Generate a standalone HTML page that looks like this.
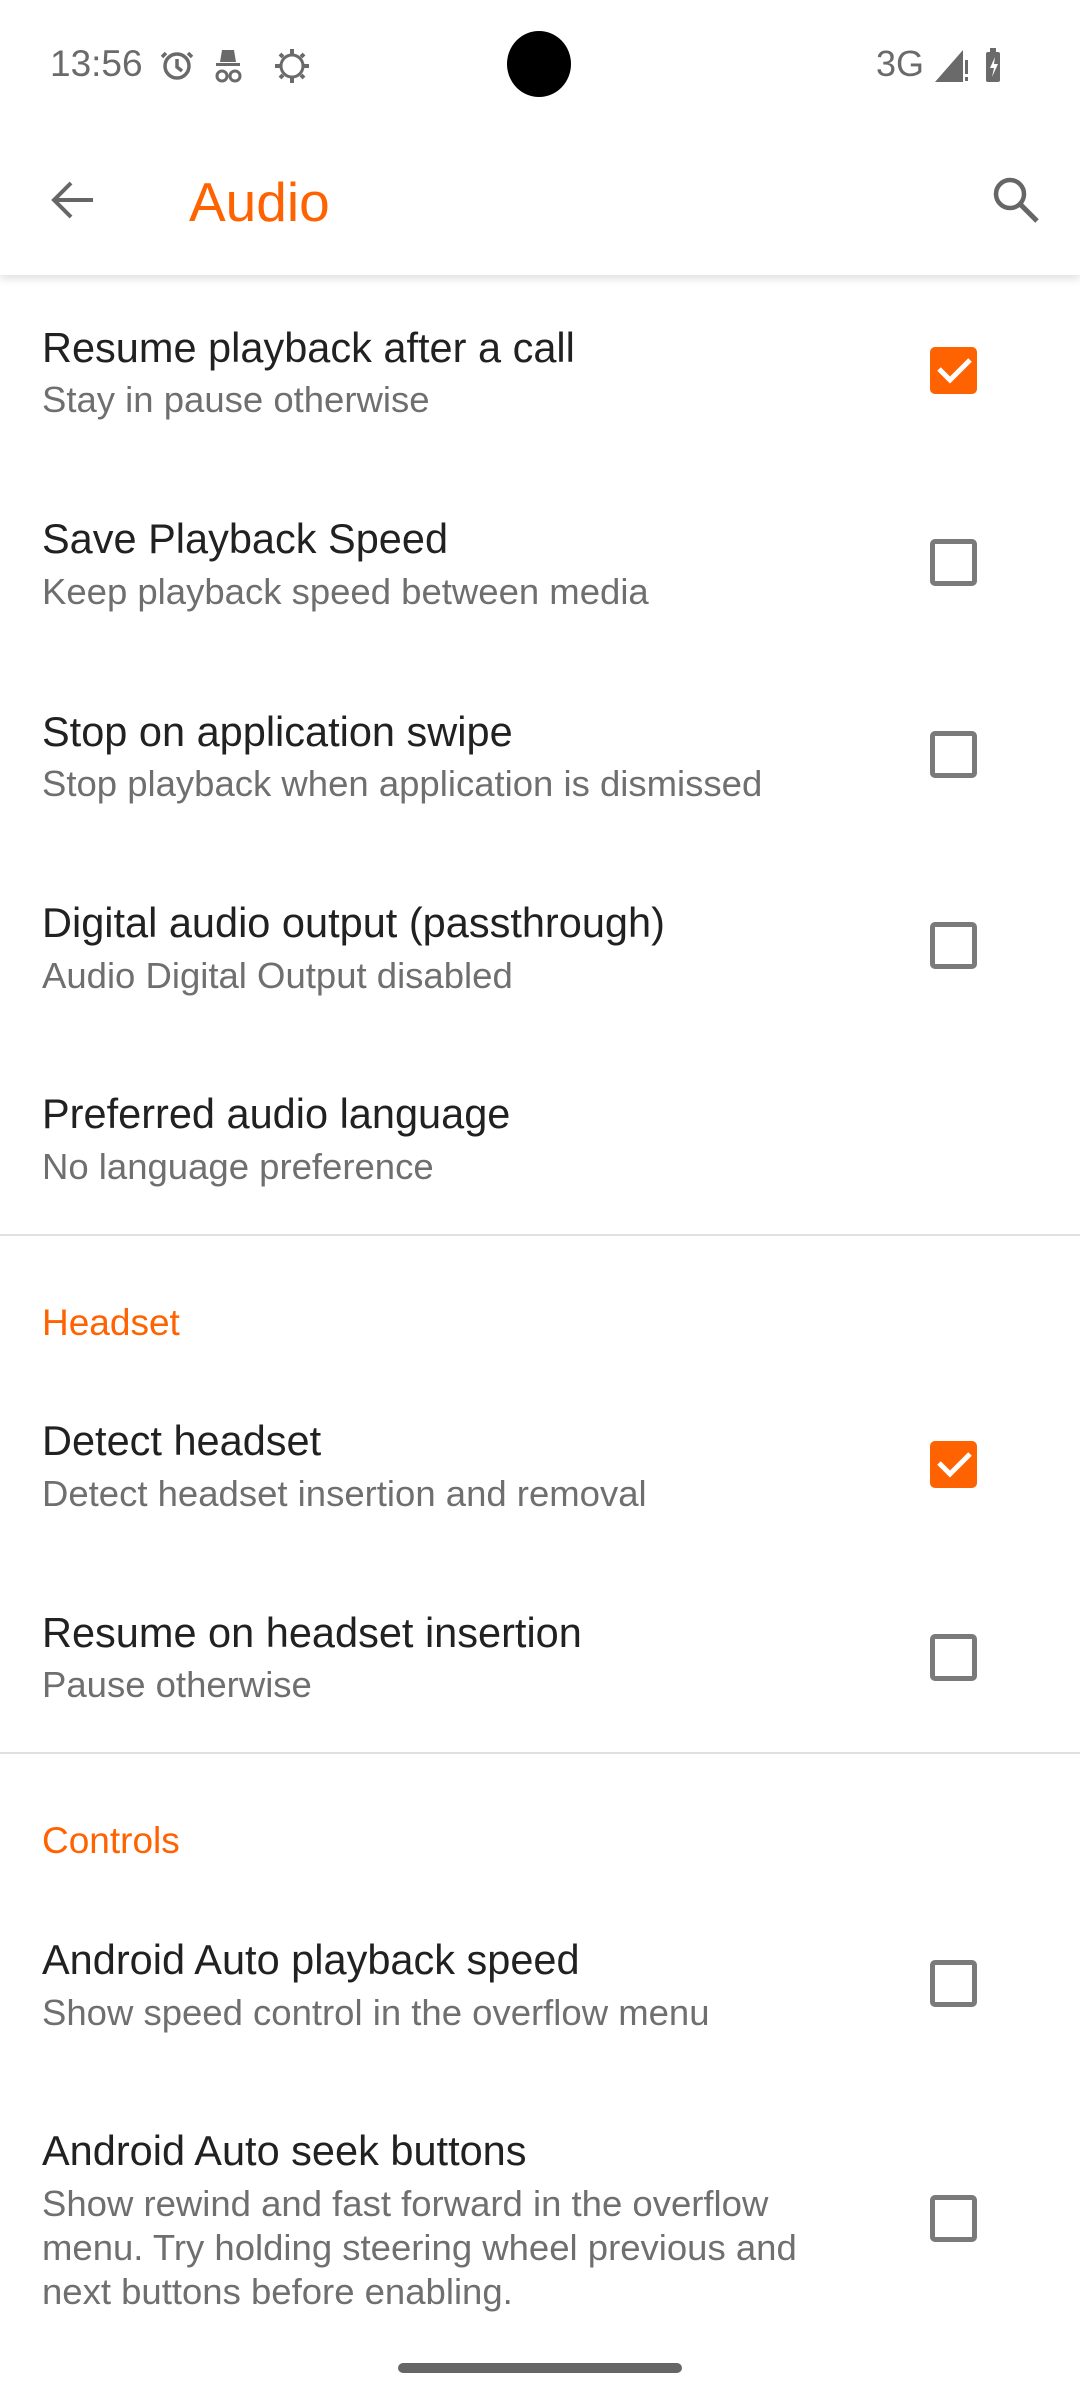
<!DOCTYPE html>
<html><head><meta charset="utf-8"><style>
*{margin:0;padding:0;box-sizing:border-box}
body{width:1080px;height:2400px;background:#fff;position:relative;overflow:hidden;font-family:"Liberation Sans",sans-serif}
.a{position:absolute;white-space:nowrap}
.t{left:42px;font-size:41.5px;color:#212121;line-height:50px}
.s{left:42px;font-size:36.5px;color:#6f6f6f;line-height:44px}
.h{left:42px;font-size:37px;color:#ff6200;line-height:44px}
.cb{position:absolute;left:930px;width:47px;height:47px;border:5px solid #7a7a7a;border-radius:5px}
.cb.on{background:#ff6200;border:none}
.div{position:absolute;left:0;width:1080px;height:2px;background:#e0e0e0}
</style></head><body>
<div class="a" style="left:0;top:0;width:1080px;height:275px;background:#fff;box-shadow:0 4px 8px rgba(0,0,0,0.12)"></div>
<div class="a" style="left:50px;top:42px;font-size:37px;color:#6a6a6a;line-height:44px">13:56</div>
<svg class="a" style="left:150px;top:46px" width="180" height="40" viewBox="0 0 180 40">
<g fill="none" stroke="#6a6a6a" stroke-width="3.5"><circle cx="27" cy="20" r="12"/><path d="M27 13v8l5 4M16 7l-4 4M38 7l4 4"/></g>
<g fill="#6a6a6a"><path d="M72 4h12l2 12h-16z"/><rect x="66" y="17" width="24" height="3"/></g>
<g fill="none" stroke="#6a6a6a" stroke-width="3"><circle cx="72" cy="30" r="5"/><circle cx="85" cy="30" r="5"/><circle cx="142" cy="20" r="11"/></g>
<g stroke="#6a6a6a" stroke-width="4"><path d="M142 3v5M142 32v5M125 20h5M154 20h5M130 8l3 3M154 8l-3 3M130 32l3-3M154 32l-3-3"/></g>
</svg>
<div class="a" style="left:876px;top:42px;font-size:36px;color:#6a6a6a;line-height:44px">3G</div>
<svg class="a" style="left:932px;top:46px" width="80" height="40" viewBox="0 0 80 40"><path d="M3 36L31 4v32z" fill="#6a6a6a"/><rect x="33" y="14" width="3" height="14" fill="#6a6a6a"/><rect x="33" y="31" width="3" height="4" fill="#6a6a6a"/><rect x="54" y="6" width="14" height="30" rx="2" fill="#6a6a6a"/><rect x="58" y="2" width="6" height="5" fill="#6a6a6a"/><path d="M63 11l-5 11h4l-2 9 6-13h-4z" fill="#fff"/></svg>
<div class="a" style="left:507px;top:31px;width:64px;height:66px;border-radius:50%;background:#000"></div>
<svg class="a" style="left:49px;top:176px" width="48" height="48" viewBox="0 0 48 48"><path d="M44 24H7M22 7L5 24l17 17" fill="none" stroke="#666" stroke-width="4"/></svg>
<div class="a" style="left:189px;top:171px;font-size:55px;color:#ff6200;line-height:62px">Audio</div>
<svg class="a" style="left:990px;top:174px" width="52" height="52" viewBox="0 0 52 52"><circle cx="20" cy="20" r="14" fill="none" stroke="#666" stroke-width="4.5"/><path d="M30 30l17 17" stroke="#666" stroke-width="5"/></svg>

<div class="a t" style="top:323px">Resume playback after a call</div>
<div class="a s" style="top:378px">Stay in pause otherwise</div>
<div class="cb on" style="top:347px"><svg width="47" height="47" viewBox="0 0 47 47"><path d="M9 22l11 11 20-20" fill="none" stroke="#fff" stroke-width="5"/></svg></div>

<div class="a t" style="top:514px">Save Playback Speed</div>
<div class="a s" style="top:570px">Keep playback speed between media</div>
<div class="cb" style="top:539px"></div>

<div class="a t" style="top:707px">Stop on application swipe</div>
<div class="a s" style="top:762px">Stop playback when application is dismissed</div>
<div class="cb" style="top:731px"></div>

<div class="a t" style="top:898px">Digital audio output (passthrough)</div>
<div class="a s" style="top:954px">Audio Digital Output disabled</div>
<div class="cb" style="top:922px"></div>

<div class="a t" style="top:1089px">Preferred audio language</div>
<div class="a s" style="top:1145px">No language preference</div>

<div class="div" style="top:1234px"></div>
<div class="a h" style="top:1301px">Headset</div>

<div class="a t" style="top:1416px">Detect headset</div>
<div class="a s" style="top:1472px">Detect headset insertion and removal</div>
<div class="cb on" style="top:1441px"><svg width="47" height="47" viewBox="0 0 47 47"><path d="M9 22l11 11 20-20" fill="none" stroke="#fff" stroke-width="5"/></svg></div>

<div class="a t" style="top:1608px">Resume on headset insertion</div>
<div class="a s" style="top:1663px">Pause otherwise</div>
<div class="cb" style="top:1634px"></div>

<div class="div" style="top:1752px"></div>
<div class="a h" style="top:1819px">Controls</div>

<div class="a t" style="top:1935px">Android Auto playback speed</div>
<div class="a s" style="top:1991px">Show speed control in the overflow menu</div>
<div class="cb" style="top:1960px"></div>

<div class="a t" style="top:2126px">Android Auto seek buttons</div>
<div class="a s" style="top:2182px">Show rewind and fast forward in the overflow<br>menu. Try holding steering wheel previous and<br>next buttons before enabling.</div>
<div class="cb" style="top:2195px"></div>

<div class="a" style="left:398px;top:2363px;width:284px;height:10px;border-radius:5px;background:#666"></div>
</body></html>
